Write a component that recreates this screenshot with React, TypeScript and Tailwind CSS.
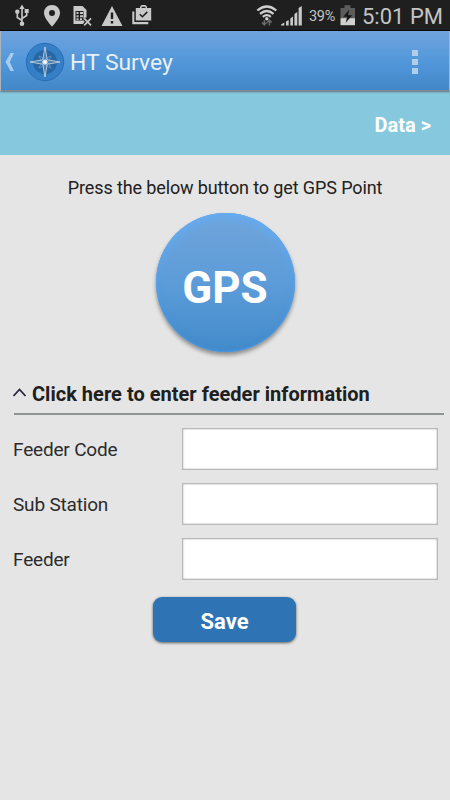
import React, { useState } from 'react';

interface FieldProps {
    label: string;
    value: string;
    onChange: (value: string) => void;
}

function StatusIcons() {
    return (
        <svg width="160" height="31" viewBox="0 0 160 31" fill="#c9c9c9">
            {/* usb */}
            <g stroke="#c9c9c9" strokeWidth="1.6" fill="none">
                <path d="M22 8v15M22 20.500l-4.700-3v-4M22 18.500l4.700-3v-3" />
            </g>
            <path d="M22 4.500l2.700 4.500h-5.400zM24.700 9h4v4h-4z" />
            <circle cx="17.300" cy="11.700" r="2.200" />
            <circle cx="22" cy="23.800" r="2.300" />
            {/* location */}
            <path fillRule="evenodd" d="M52 5c-4.500 0-8 3.500-8 7.900 0 5.400 8 13.600 8 13.600s8-8.200 8-13.600C60 8.500 56.500 5 52 5zm0 5a3 3 0 1 1 0 6 3 3 0 0 1 0-6z" />
            {/* sim card */}
            <path fillRule="evenodd" d="M73.500 6h9l4 4v7.500l-3 2 1.500 2.500-1.500 2h-10zM75.500 11v9.500h8V11z" />
            <path d="M76.500 12h2v2h-2zM80 12h3v2h-3zM76.500 15.200h2v2h-2zM80 15.200h3v2h-3zM76.500 18.300h2v1.700h-2zM80 18.300h2v1.700h-2z" />
            <path d="M84.500 18.500l6 6.500M90.500 18.500l-6 6.500" stroke="#1f1f1f" strokeWidth="4" />
            <path d="M84.200 18.300l6.800 7M91 18.300l-6.800 7" stroke="#c9c9c9" strokeWidth="1.700" />
            {/* warning */}
            <path fillRule="evenodd" d="M112 6l10.500 20h-21zM110.800 12.500v6.500h2.400v-6.500zM110.800 21v2.500h2.400V21z" />
            {/* work */}
            <path d="M132.300 11.500h2v10.500h14v2.200h-16z" />
            <path fillRule="evenodd" d="M135.800 8h4.200V6.800l1.500-1.800h4L147 6.800V8h4.200v12.500h-15.400zM141.600 8h3.800V6.800h-3.800z" />
            <path d="M139.800 14.200l2.600 2.600 4.900-4.900" stroke="#1f1f1f" strokeWidth="1.500" fill="none" />
        </svg>
    );
}

function SignalIcons() {
    return (
        <svg width="48" height="31" viewBox="256 0 48 31">
            <g stroke="#d0d0d0" strokeWidth="2.200" fill="none">
                <path d="M257.300 10.500q9.500-8 19 0M260 13.800q6.800-5.600 13.500 0M262.800 16.800q4-3.200 8 0" />
            </g>
            <circle cx="266.800" cy="18.700" r="1.700" fill="#d0d0d0" />
            <path d="M264.300 20v4.500M262 22.500l2.300 2.500 2.300-2.500M269.400 25.500v-5.500M267.100 22.500l2.300-2.500 2.300 2.500" stroke="#6b6b6b" strokeWidth="1.500" fill="none" />
            <path d="M281 25.500v-1l3.300-2v3zM286 21.500l2.700-1.500v5.500H286zM290.300 18.500l2.700-2v9h-2.700zM294.400 14l2.900-2v13.500h-2.900zM298.600 8l3.200-2v19.500h-3.200z" fill="#c9c9c9" />
        </svg>
    );
}

function BatteryIcon() {
    return (
        <svg width="16" height="31" viewBox="340 0 16 31">
            <path d="M340.500 8h4V5.200h6V8h4.500v10.500h-14.500z" fill="#5c5c5c" />
            <path d="M340.500 18.200H355v7h-14.500z" fill="#d0d0d0" />
            <path d="M349.300 9.500l-6 7.200h4l-1.700 6 6.700-7.500h-4.200z" fill="#161616" />
        </svg>
    );
}

function CompassLogo() {
    return (
        <svg width="40" height="40" viewBox="0 0 40 40" className="relative top-px ml-[11px]">
            <circle cx="20" cy="20" r="18.700" fill="#347fc6" stroke="#2a6eb5" strokeWidth="1" />
            <circle cx="20" cy="20" r="12" fill="#2767a5" />
            <g stroke="#7fa6cb" strokeWidth="0.600" fill="none">
                <path d="M14 14l4.500 2 1.500 4-4-1.500zM26 14l-2 4.500-4 1.500 1.500-4zM26 26l-4.500-2-1.500-4 4 1.500zM14 26l2-4.500 4-1.500-1.500 4z" />
                <path d="M20 5l2.200 12.800L35 20l-12.800 2.200L20 35l-2.200-12.800L5 20l12.800-2.200z" stroke="#c6d3de" strokeWidth="0.900" />
                <path d="M20 5v30M5 20h30" stroke="#a5bdd3" />
            </g>
            <circle cx="20" cy="20" r="2.600" fill="#cfdfec" />
            <circle cx="20" cy="20" r="1.500" fill="#ffffff" />
        </svg>
    );
}

function Field({ label, value, onChange }: FieldProps) {
    return (
        <label className="flex h-[55px] items-center pl-[13px]">
            <span className="w-[169px] pt-px text-[19px] tracking-[-0.180px] text-[#2b2b2b]">{label}</span>
            <input
                className="-mt-px h-[42px] w-[256px] border border-[#b8b8b8] bg-white px-2 text-lg shadow-[inset_0_0_2px_#aaa] outline-none"
                value={value}
                onChange={(e) => onChange(e.target.value)}
            />
        </label>
    );
}

export default function App() {
    const [feederCode, setFeederCode] = useState("");
    const [subStation, setSubStation] = useState("");
    const [feeder, setFeeder] = useState("");

    return (
        <div className="flex h-[800px] w-[450px] flex-col overflow-hidden bg-[#e5e5e5] font-['Roboto',sans-serif]">
            <div className="flex h-[31px] shrink-0 items-center border-b border-black bg-[#1f1f1f] text-[#c4c4c4]">
                <StatusIcons />
                <div className="ml-[96px]"><SignalIcons /></div>
                <span className="ml-[5px] w-[31px] whitespace-nowrap pt-[4px] text-[14.500px] leading-none tracking-[-0.300px]">39%</span>
                <BatteryIcon />
                <span className="ml-[6px] whitespace-nowrap pt-[3px] text-[22px] leading-none">5:01 PM</span>
            </div>

            <header className="z-10 flex h-[60px] shrink-0 items-center border-x border-b border-x-[#a9b4be] border-b-[#7d8a98] bg-linear-to-b from-[#70a3de] via-[#5298da] to-[#4288c9] shadow-[0_1px_2px_#63727c]">
                <svg width="9" height="18" viewBox="0 0 9 18" className="relative top-px ml-[4px]">
                    <path d="M5.500 0H9L4.800 9 9 18H5.500L0.500 9z" fill="#a9cbed" />
                </svg>
                <CompassLogo />
                <h1 className="ml-[5px] pt-[5px] text-[22.900px] text-[#eaf0f7]">HT Survey</h1>
                <button className="mt-[2px] mr-[31px] ml-auto flex flex-col gap-[3px]">
                    <i className="size-[6px] bg-[#b0cdec]" />
                    <i className="size-[6px] bg-[#b0cdec]" />
                    <i className="size-[6px] bg-[#b0cdec]" />
                </button>
            </header>

            <nav className="flex h-[64px] shrink-0 items-center justify-end bg-[#86c9df] pr-[19px]">
                <a className="pt-[4px] text-[20px] font-bold text-white">Data &gt;</a>
            </nav>

            <main className="flex flex-col">
                <p className="mt-[21px] text-center text-[18px] leading-6 tracking-[-0.120px] text-[#202020]">Press the below button to get GPS Point</p>
                <button className="mt-[13px] h-[139px] w-[139px] self-center rounded-full bg-linear-to-b from-[#70a4da] via-[#5c9cd9] to-[#438bcb] text-[44px] font-bold text-white shadow-[0_3px_4px_#0006,inset_0_5px_9px_#69b0f5,inset_0_0_7px_#3c82c4,inset_0_-1px_2px_#4a9ff0]">
                    <span className="relative top-[5px]">GPS</span>
                </button>

                <div className="mt-[25px] mr-[6px] ml-[14px] flex h-[38px] items-center border-b-2 border-[#919494] pb-[3px]">
                    <svg width="13" height="9" viewBox="0 0 13 9" className="relative -top-px -ml-[1px]" fill="none">
                        <path d="M0.500 8l6-6.500L12.500 8" stroke="#25253a" strokeWidth="1.700" />
                    </svg>
                    <h2 className="ml-[6px] whitespace-nowrap text-[20px] font-bold tracking-[0.020px] text-[#202020]">Click here to enter feeder information</h2>
                </div>

                <div className="mt-[7px]">
                    <Field label="Feeder Code" value={feederCode} onChange={setFeederCode} />
                    <Field label="Sub Station" value={subStation} onChange={setSubStation} />
                    <Field label="Feeder" value={feeder} onChange={setFeeder} />
                </div>

                <button className="mt-[10px] ml-[153px] h-[45px] w-[143px] rounded-[9px] bg-[#2e74b5] pt-1 text-[22px] font-bold text-white shadow-[0_1px_3px_#0009]">
                    Save
                </button>
            </main>
        </div>
    );
}
